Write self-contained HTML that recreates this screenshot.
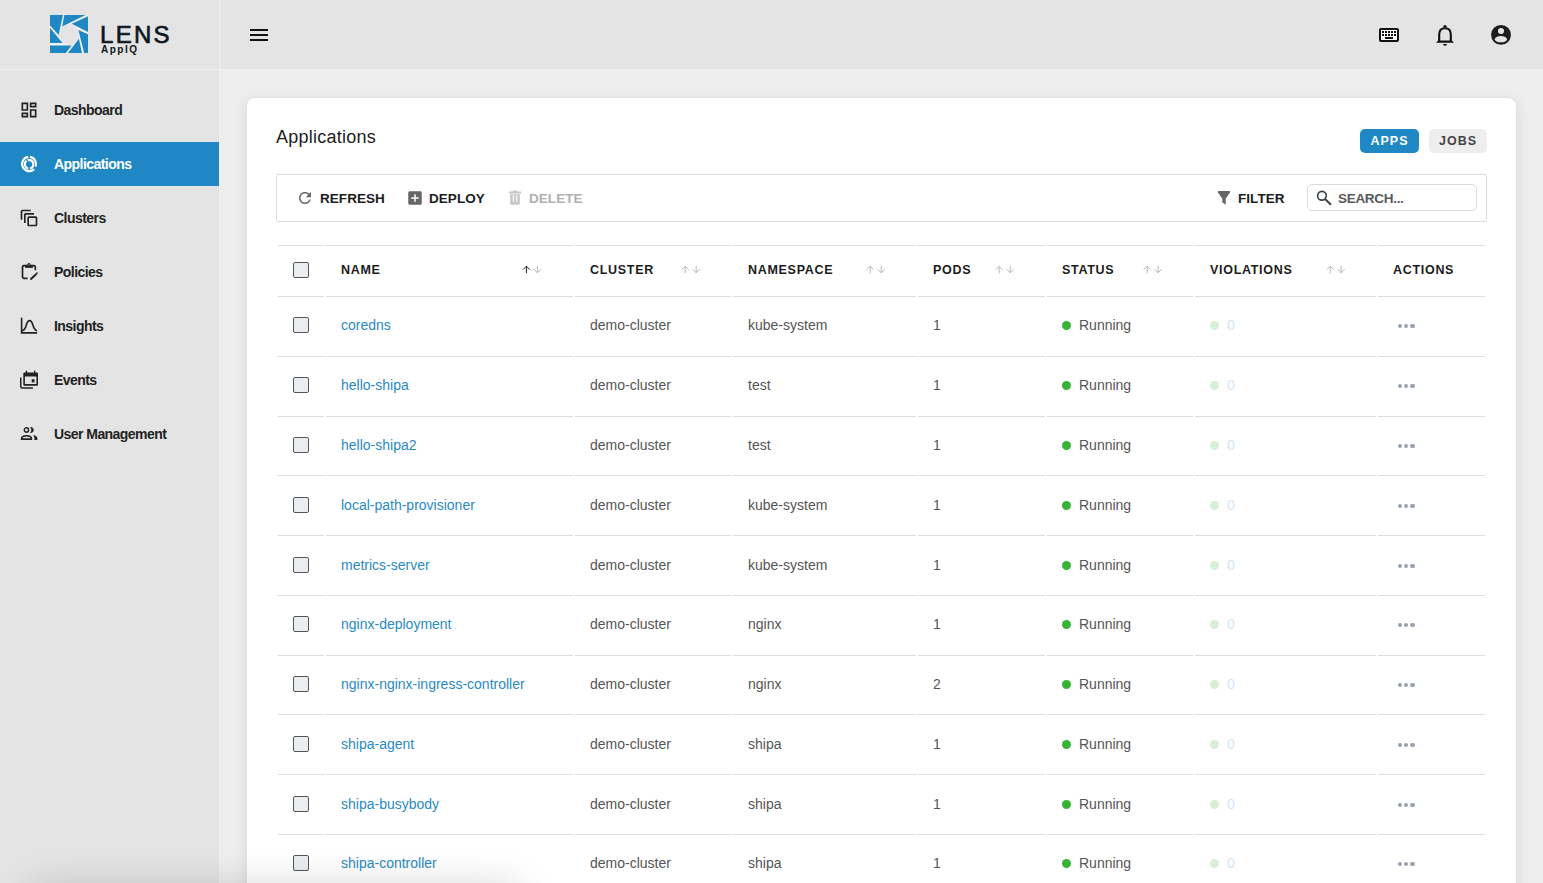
<!DOCTYPE html>
<html><head><meta charset="utf-8"><style>
*{box-sizing:border-box;margin:0;padding:0}
html,body{width:1543px;height:883px;overflow:hidden;background:#eeeeee;font-family:"Liberation Sans",sans-serif;position:relative}
.abs{position:absolute}
svg{position:absolute;overflow:visible}
#side{left:0;top:0;width:219px;height:883px;background:#e4e4e4}
#sideline{left:219px;top:0;width:1px;height:69px;background:#efefef}
#hdr{left:220px;top:0;width:1323px;height:69px;background:#e4e4e4}
#hline{left:0;top:69px;width:219px;height:1px;background:#efefef}
.nav{position:absolute;left:0;width:219px;height:44px;color:#222;font-size:14px;letter-spacing:-0.55px;font-weight:bold}
.nav span{position:absolute;left:54px;top:13px;line-height:18px;white-space:nowrap}
.nav svg{left:19px;top:12px}
.nav.sel{background:#1f88c4;color:#fff}
#card{left:247px;top:98px;width:1269px;height:900px;background:#fff;border-radius:8px;box-shadow:0 3px 14px rgba(10,25,45,.11),0 0 2px rgba(0,0,0,.05)}
#title{left:276px;top:126px;font-size:18px;letter-spacing:0.25px;color:#1c1c1c;line-height:22px;white-space:nowrap}
.tbtn{position:absolute;top:129px;height:24px;border-radius:5px;font-size:12.5px;font-weight:bold;letter-spacing:1.0px;line-height:24px;text-align:center;padding-left:0px}
#toolbar{left:276px;top:174px;width:1211px;height:48px;border:1px solid #dcdcdc;border-radius:2px}
.tb{position:absolute;top:190px;font-size:13.5px;font-weight:bold;letter-spacing:0.05px;line-height:18px;color:#1c1c1c;white-space:nowrap}
#search{left:1307px;top:184px;width:170px;height:27px;border:1px solid #dcdcdc;border-radius:5px}
.hl{position:absolute;height:1px;background:#dedede}
.th{position:absolute;top:262px;font-size:12.5px;font-weight:bold;letter-spacing:0.7px;color:#1c1c1c;line-height:16px;white-space:nowrap}
.td{position:absolute;font-size:14px;color:#555;line-height:18px;white-space:nowrap}
.lnk{color:#2a8ac4}
.cb{position:absolute;left:293px;width:16px;height:16px;border:1.5px solid #555;border-radius:2px;background:#eaeef2}
.dot{position:absolute;width:9px;height:9px;border-radius:50%}
.more{position:absolute;width:4.4px;height:4.4px;border-radius:50%;background:#97a2ae}
</style></head><body>
<div id="side" class="abs"></div><div id="hdr" class="abs"></div><div id="sideline" class="abs"></div><div id="hline" class="abs"></div>
<svg style="left:50px;top:15px" width="38" height="38" viewBox="0 0 38 38"><rect width="38" height="38" fill="#f4f0ec"/><polygon points="12.0,11.35 21.1,8.5 28.1,14.7 28.9,23.6 21.6,30.1 12.5,27.8 8.6,20.2" fill="#e4e4e4"/><polygon points="0,0 13.0,0 8.6,19.9 0,10.3" fill="#1f88c4"/><polygon points="14.3,0 35.7,0 12.2,11.4" fill="#1f88c4"/><polygon points="38,1.2 38,17.1 21.6,8.75" fill="#1f88c4"/><polygon points="28.4,15 38,19.2 38,38 34.1,38" fill="#1f88c4"/><polygon points="28.9,23.85 32,38 18,38" fill="#1f88c4"/><polygon points="0,30.4 21.6,30.4 15.9,38 0,38" fill="#1f88c4"/><polygon points="0,12.65 12.5,28 0,28" fill="#1f88c4"/></svg>
<div class="abs" style="left:100px;top:20px;font-size:24px;font-weight:normal;-webkit-text-stroke:0.65px #0d1620;letter-spacing:2.3px;color:#0d1620;line-height:30px">LENS</div>
<div class="abs" style="left:101px;top:44px;font-size:10px;font-weight:bold;letter-spacing:1.5px;color:#0d1620;line-height:12px">AppIQ</div>
<svg style="left:247px;top:23px" width="24" height="24" viewBox="0 0 24 24"><path fill="#111" d="M3 18h18v-2H3v2zm0-5h18v-2H3v2zm0-7v2h18V6H3z"/></svg>
<svg style="left:1377px;top:23px" width="24" height="24" viewBox="0 0 24 24"><path fill="#fff" d="M4 7h16v10H4z"/><path fill="#111" d="M20 7v10H4V7h16m0-2H4c-1.1 0-1.99.9-1.99 2L2 17c0 1.1.9 2 2 2h16c1.1 0 2-.9 2-2V7c0-1.1-.9-2-2-2zm-9 3h2v2h-2zm0 3h2v2h-2zM8 8h2v2H8zm0 3h2v2H8zm-3 0h2v2H5zm0-3h2v2H5zm3 6h8v2H8zm6-3h2v2h-2zm0-3h2v2h-2zm3 3h2v2h-2zm0-3h2v2h-2z"/></svg>
<svg style="left:0;top:0" width="1543" height="60"><path fill="#111" d="M1443 27.6 Q1443 25 1445 25 Q1447 25 1447 27.6 Z"/><path fill="none" stroke="#111" stroke-width="2.1" d="M1439.2 41 V34.5 Q1439.2 28.2 1445 28.2 Q1450.8 28.2 1450.8 34.5 V41"/><path fill="#111" d="M1436 42.8 L1438.2 40.4 H1451.8 L1454 42.8 Z"/><path fill="#111" d="M1443 44 H1447 Q1447 45.8 1445 45.8 Q1443 45.8 1443 44Z"/></svg>
<svg style="left:0;top:0" width="1543" height="60"><circle cx="1501" cy="34.85" r="9.95" fill="#1c1c1c"/><circle cx="1501" cy="31.05" r="3.05" fill="#e4e4e4"/><ellipse cx="1500.9" cy="39.2" rx="6.1" ry="3.1" fill="#e4e4e4"/></svg>
<div class="nav" style="top:88px" id="nav0"><svg width="20" height="20" viewBox="0 0 24 24"><path fill="#222" d="M19 5v2h-4V5h4M9 5v6H5V5h4m10 8v6h-4v-6h4M9 17v2H5v-2h4M21 3h-8v6h8V3zM11 3H3v10h8V3zm10 8h-8v10h8V11zm-10 4H3v6h8v-6z"/></svg><span>Dashboard</span></div>
<div class="nav sel" style="top:142px" id="nav1"><svg width="20" height="20" viewBox="0 0 20 20"><g fill="none" stroke="#fff"><path stroke-width="2.1" d="M9.3 2.9 A7.2 7.2 0 1 0 15.2 15.3"/><path stroke-width="2.1" d="M11.0 2.9 A7.2 7.2 0 0 1 16.6 12.6"/><circle cx="10.1" cy="10.3" r="4.3" stroke-width="2.3"/></g><path fill="#1f88c4" d="M9.3 9.5 H10.9 V16 H9.3 Z"/><path fill="none" stroke="#1f88c4" stroke-width="1.3" d="M7.3 5.2 L9.8 9.2"/><circle cx="10.6" cy="10" r="1.6" fill="#1f88c4"/></svg><span>Applications</span></div>
<div class="nav" style="top:196px" id="nav2"><svg width="20" height="20" viewBox="0 0 24 24"><path fill="#222" d="M14 2H4c-1.1 0-2 .9-2 2v10h2V4h10V2zm4 4H8c-1.1 0-2 .9-2 2v10h2V8h10V6zm2 4h-8c-1.1 0-2 .9-2 2v8c0 1.1.9 2 2 2h8c1.1 0 2-.9 2-2v-8c0-1.1-.9-2-2-2zm0 10h-8v-8h8v8z"/></svg><span>Clusters</span></div>
<div class="nav" style="top:250px" id="nav3"><svg width="20" height="20" viewBox="0 0 20 20"><g fill="none" stroke="#222" stroke-width="1.7" stroke-linejoin="round"><path d="M8.6 16.4 H4.8 Q3.5 16.4 3.5 15.1 V4.9 Q3.5 3.6 4.8 3.6 H15 Q16.3 3.6 16.3 4.9 V8.3"/></g><path fill="#222" d="M6.2 3.2 H13.9 V5.9 H6.2 Z"/><circle cx="9.95" cy="2.7" r="1.7" fill="#222"/><circle cx="9.95" cy="2.8" r="0.6" fill="#e4e4e4"/><path fill="none" stroke="#222" stroke-width="2" stroke-linecap="round" d="M12 16.9 L16.8 12.4"/><path fill="none" stroke="#222" stroke-width="1.5" d="M17.4 10.6 L18.5 11.7"/></svg><span>Policies</span></div>
<div class="nav" style="top:304px" id="nav4"><svg width="20" height="20" viewBox="0 0 20 20"><g fill="none" stroke="#222" stroke-width="1.6"><path d="M2.6 1.8 V16.9 H18.1"/><path d="M2.9 14.7 C5.4 14.7 6.3 13 7.4 8.8 C8.4 5.2 9.2 4.6 10.6 4.6 C12 4.6 12.8 5.2 13.8 8.8 C15 13 15.9 14.3 18.1 14.8"/></g></svg><span>Insights</span></div>
<div class="nav" style="top:358px" id="nav5"><svg width="20" height="20" viewBox="0 0 20 20"><g fill="#222"><path fill-rule="evenodd" d="M5.3 2.6 H18 Q19 2.6 19 3.6 V14.7 Q19 15.7 18 15.7 H5.3 Q4.3 15.7 4.3 14.7 V3.6 Q4.3 2.6 5.3 2.6 Z M5.9 6.5 V14.1 H17.4 V6.5 Z"/><rect x="6.8" y="0.6" width="1.3" height="2.4"/><rect x="15.0" y="0.6" width="1.3" height="2.4"/><rect x="12.7" y="9.2" width="2.8" height="3.2"/></g><path fill="none" stroke="#222" stroke-width="1.5" d="M1.75 7.4 V16.6 Q1.75 18.05 3.2 18.05 H13.9"/></svg><span>Events</span></div>
<div class="nav" style="top:412px" id="nav6"><svg width="20" height="20" viewBox="0 0 20 20"><g fill="none" stroke="#222" stroke-width="1.5"><circle cx="7.45" cy="6" r="2.15"/></g><path fill="#222" d="M11.1 3.2 A2.9 2.9 0 1 1 11.1 8.8 A4.2 4.2 0 0 0 11.1 3.2Z"/><path fill-rule="evenodd" fill="#222" d="M1.8 15.9 V14.6 Q1.8 11 7.5 11 Q13.2 11 13.2 14.6 V15.9 Z M3.4 14.3 H11.6 Q11.3 12.6 7.5 12.6 Q3.7 12.6 3.4 14.3Z"/><path fill="#222" d="M14 11.1 Q18.4 11.8 18.4 14.6 V15.9 H15.4 V14.4 Q15.4 12.6 14 11.1Z"/></svg><span>User Management</span></div>
<div id="card" class="abs"></div>
<div id="title" class="abs">Applications</div>
<div class="tbtn" id="apps" style="left:1360px;width:59px;background:#1f88c4;color:#fff">APPS</div>
<div class="tbtn" id="jobs" style="left:1429px;width:58px;background:#eeeeee;color:#444">JOBS</div>
<div id="toolbar" class="abs"></div>
<svg style="left:296px;top:189px" width="18" height="18" viewBox="0 0 24 24"><path fill="#666" d="M17.65 6.35C16.2 4.9 14.21 4 12 4c-4.42 0-7.99 3.58-7.99 8s3.57 8 7.99 8c3.73 0 6.84-2.55 7.730-6h-2.08c-.82 2.33-3.04 4-5.65 4-3.31 0-6-2.69-6-6s2.69-6 6-6c1.660 0 3.14.69 4.220 1.78L13 11h7V4l-2.35 2.35z"/></svg>
<div class="tb" id="t_refresh" style="left:320px">REFRESH</div>
<svg style="left:406px;top:189px" width="18" height="18" viewBox="0 0 24 24"><path fill="#666" d="M19 3H5c-1.11 0-2 .9-2 2v14c0 1.1.89 2 2 2h14c1.1 0 2-.9 2-2V5c0-1.1-.9-2-2-2zm-2 10h-4v4h-2v-4H7v-2h4V7h2v4h4v2z"/></svg>
<div class="tb" id="t_deploy" style="left:429px">DEPLOY</div>
<svg style="left:0;top:0" width="1" height="1"><path fill="#c6c6c6" d="M513.2 190.6 H516.8 L517.5 191.4 H521 V193.4 H509 V191.4 H512.5 Z M510.2 194.2 H519.8 V203.6 Q519.8 204.8 518.6 204.8 H511.4 Q510.2 204.8 510.2 203.6 Z M512.8 195.2 V201.8 H514 V195.2 Z M516 195.2 V201.8 H517.2 V195.2 Z" fill-rule="evenodd"/></svg>
<div class="tb" id="t_delete" style="left:529px;color:#b0b0b0">DELETE</div>
<svg style="left:0;top:0" width="1" height="1"><path fill="#666" d="M1218 191 H1230 V192.6 L1225.7 198.8 V204.8 L1222.3 202.2 V198.8 L1218 192.6 Z"/></svg>
<div class="tb" id="t_filter" style="left:1238px">FILTER</div>
<div id="search" class="abs"></div>
<svg style="left:0;top:0" width="1" height="1"><circle cx="1321.95" cy="195.75" r="4.35" fill="none" stroke="#3a4249" stroke-width="1.6"/><path d="M1325.3 199.2 L1330.3 204" stroke="#3a4249" stroke-width="2" stroke-linecap="square"/></svg>
<div class="tb" id="t_search" style="left:1338px;color:#595959;letter-spacing:-0.3px">SEARCH...</div>
<div class="hl" style="left:278px;top:245px;width:46px"></div>
<div class="hl" style="left:326px;top:245px;width:247px"></div>
<div class="hl" style="left:575px;top:245px;width:156px"></div>
<div class="hl" style="left:733px;top:245px;width:183px"></div>
<div class="hl" style="left:918px;top:245px;width:127px"></div>
<div class="hl" style="left:1047px;top:245px;width:146px"></div>
<div class="hl" style="left:1195px;top:245px;width:181px"></div>
<div class="hl" style="left:1378px;top:245px;width:107px"></div>
<div class="hl" style="left:278px;top:296px;width:46px"></div>
<div class="hl" style="left:326px;top:296px;width:247px"></div>
<div class="hl" style="left:575px;top:296px;width:156px"></div>
<div class="hl" style="left:733px;top:296px;width:183px"></div>
<div class="hl" style="left:918px;top:296px;width:127px"></div>
<div class="hl" style="left:1047px;top:296px;width:146px"></div>
<div class="hl" style="left:1195px;top:296px;width:181px"></div>
<div class="hl" style="left:1378px;top:296px;width:107px"></div>
<div class="hl" style="left:278px;top:356px;width:46px"></div>
<div class="hl" style="left:326px;top:356px;width:247px"></div>
<div class="hl" style="left:575px;top:356px;width:156px"></div>
<div class="hl" style="left:733px;top:356px;width:183px"></div>
<div class="hl" style="left:918px;top:356px;width:127px"></div>
<div class="hl" style="left:1047px;top:356px;width:146px"></div>
<div class="hl" style="left:1195px;top:356px;width:181px"></div>
<div class="hl" style="left:1378px;top:356px;width:107px"></div>
<div class="hl" style="left:278px;top:416px;width:46px"></div>
<div class="hl" style="left:326px;top:416px;width:247px"></div>
<div class="hl" style="left:575px;top:416px;width:156px"></div>
<div class="hl" style="left:733px;top:416px;width:183px"></div>
<div class="hl" style="left:918px;top:416px;width:127px"></div>
<div class="hl" style="left:1047px;top:416px;width:146px"></div>
<div class="hl" style="left:1195px;top:416px;width:181px"></div>
<div class="hl" style="left:1378px;top:416px;width:107px"></div>
<div class="hl" style="left:278px;top:475px;width:46px"></div>
<div class="hl" style="left:326px;top:475px;width:247px"></div>
<div class="hl" style="left:575px;top:475px;width:156px"></div>
<div class="hl" style="left:733px;top:475px;width:183px"></div>
<div class="hl" style="left:918px;top:475px;width:127px"></div>
<div class="hl" style="left:1047px;top:475px;width:146px"></div>
<div class="hl" style="left:1195px;top:475px;width:181px"></div>
<div class="hl" style="left:1378px;top:475px;width:107px"></div>
<div class="hl" style="left:278px;top:535px;width:46px"></div>
<div class="hl" style="left:326px;top:535px;width:247px"></div>
<div class="hl" style="left:575px;top:535px;width:156px"></div>
<div class="hl" style="left:733px;top:535px;width:183px"></div>
<div class="hl" style="left:918px;top:535px;width:127px"></div>
<div class="hl" style="left:1047px;top:535px;width:146px"></div>
<div class="hl" style="left:1195px;top:535px;width:181px"></div>
<div class="hl" style="left:1378px;top:535px;width:107px"></div>
<div class="hl" style="left:278px;top:595px;width:46px"></div>
<div class="hl" style="left:326px;top:595px;width:247px"></div>
<div class="hl" style="left:575px;top:595px;width:156px"></div>
<div class="hl" style="left:733px;top:595px;width:183px"></div>
<div class="hl" style="left:918px;top:595px;width:127px"></div>
<div class="hl" style="left:1047px;top:595px;width:146px"></div>
<div class="hl" style="left:1195px;top:595px;width:181px"></div>
<div class="hl" style="left:1378px;top:595px;width:107px"></div>
<div class="hl" style="left:278px;top:655px;width:46px"></div>
<div class="hl" style="left:326px;top:655px;width:247px"></div>
<div class="hl" style="left:575px;top:655px;width:156px"></div>
<div class="hl" style="left:733px;top:655px;width:183px"></div>
<div class="hl" style="left:918px;top:655px;width:127px"></div>
<div class="hl" style="left:1047px;top:655px;width:146px"></div>
<div class="hl" style="left:1195px;top:655px;width:181px"></div>
<div class="hl" style="left:1378px;top:655px;width:107px"></div>
<div class="hl" style="left:278px;top:714px;width:46px"></div>
<div class="hl" style="left:326px;top:714px;width:247px"></div>
<div class="hl" style="left:575px;top:714px;width:156px"></div>
<div class="hl" style="left:733px;top:714px;width:183px"></div>
<div class="hl" style="left:918px;top:714px;width:127px"></div>
<div class="hl" style="left:1047px;top:714px;width:146px"></div>
<div class="hl" style="left:1195px;top:714px;width:181px"></div>
<div class="hl" style="left:1378px;top:714px;width:107px"></div>
<div class="hl" style="left:278px;top:774px;width:46px"></div>
<div class="hl" style="left:326px;top:774px;width:247px"></div>
<div class="hl" style="left:575px;top:774px;width:156px"></div>
<div class="hl" style="left:733px;top:774px;width:183px"></div>
<div class="hl" style="left:918px;top:774px;width:127px"></div>
<div class="hl" style="left:1047px;top:774px;width:146px"></div>
<div class="hl" style="left:1195px;top:774px;width:181px"></div>
<div class="hl" style="left:1378px;top:774px;width:107px"></div>
<div class="hl" style="left:278px;top:834px;width:46px"></div>
<div class="hl" style="left:326px;top:834px;width:247px"></div>
<div class="hl" style="left:575px;top:834px;width:156px"></div>
<div class="hl" style="left:733px;top:834px;width:183px"></div>
<div class="hl" style="left:918px;top:834px;width:127px"></div>
<div class="hl" style="left:1047px;top:834px;width:146px"></div>
<div class="hl" style="left:1195px;top:834px;width:181px"></div>
<div class="hl" style="left:1378px;top:834px;width:107px"></div>
<div class="th" id="h0" style="left:341px">NAME</div>
<div class="th" id="h1" style="left:590px">CLUSTER</div>
<div class="th" id="h2" style="left:748px">NAMESPACE</div>
<div class="th" id="h3" style="left:933px">PODS</div>
<div class="th" id="h4" style="left:1062px">STATUS</div>
<div class="th" id="h5" style="left:1210px">VIOLATIONS</div>
<div class="th" id="h6" style="left:1393px">ACTIONS</div>
<svg style="left:0;top:0" width="1" height="1"><g fill="none" stroke-width="1.0" stroke-linecap="round" stroke-linejoin="round"><path stroke="#222" d="M526.4000000000001 272.9 V266.4 M523.2 269.4 L526.4000000000001 266.2 L529.6000000000001 269.4"/><path stroke="#b8b8b8" d="M537.4000000000001 266.1 V272.6 M534.2 269.6 L537.4000000000001 272.8 L540.6000000000001 269.6"/></g></svg>
<svg style="left:0;top:0" width="1" height="1"><g fill="none" stroke-width="1.0" stroke-linecap="round" stroke-linejoin="round"><path stroke="#b8b8b8" d="M685.2 272.9 V266.4 M682.0 269.4 L685.2 266.2 L688.4000000000001 269.4"/><path stroke="#b8b8b8" d="M696.2 266.1 V272.6 M693.0 269.6 L696.2 272.8 L699.4000000000001 269.6"/></g></svg>
<svg style="left:0;top:0" width="1" height="1"><g fill="none" stroke-width="1.0" stroke-linecap="round" stroke-linejoin="round"><path stroke="#b8b8b8" d="M870.2 272.9 V266.4 M867.0 269.4 L870.2 266.2 L873.4000000000001 269.4"/><path stroke="#b8b8b8" d="M881.2 266.1 V272.6 M878.0 269.6 L881.2 272.8 L884.4000000000001 269.6"/></g></svg>
<svg style="left:0;top:0" width="1" height="1"><g fill="none" stroke-width="1.0" stroke-linecap="round" stroke-linejoin="round"><path stroke="#b8b8b8" d="M999.2 272.9 V266.4 M996.0 269.4 L999.2 266.2 L1002.4000000000001 269.4"/><path stroke="#b8b8b8" d="M1010.2 266.1 V272.6 M1007.0 269.6 L1010.2 272.8 L1013.4000000000001 269.6"/></g></svg>
<svg style="left:0;top:0" width="1" height="1"><g fill="none" stroke-width="1.0" stroke-linecap="round" stroke-linejoin="round"><path stroke="#b8b8b8" d="M1147.2 272.9 V266.4 M1144.0 269.4 L1147.2 266.2 L1150.4 269.4"/><path stroke="#b8b8b8" d="M1158.2 266.1 V272.6 M1155.0 269.6 L1158.2 272.8 L1161.4 269.6"/></g></svg>
<svg style="left:0;top:0" width="1" height="1"><g fill="none" stroke-width="1.0" stroke-linecap="round" stroke-linejoin="round"><path stroke="#b8b8b8" d="M1330.2 272.9 V266.4 M1327.0 269.4 L1330.2 266.2 L1333.4 269.4"/><path stroke="#b8b8b8" d="M1341.2 266.1 V272.6 M1338.0 269.6 L1341.2 272.8 L1344.4 269.6"/></g></svg>
<div class="cb" style="top:262px"></div>
<div class="cb" style="top:317px"></div>
<div class="td lnk" id="n0" style="left:341px;top:316px">coredns</div>
<div class="td" id="c0" style="left:590px;top:316px">demo-cluster</div>
<div class="td" id="s0" style="left:748px;top:316px">kube-system</div>
<div class="td" style="left:933px;top:316px">1</div>
<div class="dot" style="left:1062px;top:321px;background:#37b337"></div>
<div class="td" id="r0" style="left:1079px;top:316px">Running</div>
<div class="dot" style="left:1210px;top:321px;background:#d6f0d6"></div>
<div class="td" style="left:1227px;top:316px;color:#d3e6f5">0</div>
<div class="more" style="left:1397.5px;top:324px"></div>
<div class="more" style="left:1403.7px;top:324px"></div>
<div class="more" style="left:1410.3px;top:324px"></div>
<div class="cb" style="top:377px"></div>
<div class="td lnk" id="n1" style="left:341px;top:376px">hello-shipa</div>
<div class="td" id="c1" style="left:590px;top:376px">demo-cluster</div>
<div class="td" id="s1" style="left:748px;top:376px">test</div>
<div class="td" style="left:933px;top:376px">1</div>
<div class="dot" style="left:1062px;top:381px;background:#37b337"></div>
<div class="td" id="r1" style="left:1079px;top:376px">Running</div>
<div class="dot" style="left:1210px;top:381px;background:#d6f0d6"></div>
<div class="td" style="left:1227px;top:376px;color:#d3e6f5">0</div>
<div class="more" style="left:1397.5px;top:384px"></div>
<div class="more" style="left:1403.7px;top:384px"></div>
<div class="more" style="left:1410.3px;top:384px"></div>
<div class="cb" style="top:437px"></div>
<div class="td lnk" id="n2" style="left:341px;top:436px">hello-shipa2</div>
<div class="td" id="c2" style="left:590px;top:436px">demo-cluster</div>
<div class="td" id="s2" style="left:748px;top:436px">test</div>
<div class="td" style="left:933px;top:436px">1</div>
<div class="dot" style="left:1062px;top:441px;background:#37b337"></div>
<div class="td" id="r2" style="left:1079px;top:436px">Running</div>
<div class="dot" style="left:1210px;top:441px;background:#d6f0d6"></div>
<div class="td" style="left:1227px;top:436px;color:#d3e6f5">0</div>
<div class="more" style="left:1397.5px;top:444px"></div>
<div class="more" style="left:1403.7px;top:444px"></div>
<div class="more" style="left:1410.3px;top:444px"></div>
<div class="cb" style="top:497px"></div>
<div class="td lnk" id="n3" style="left:341px;top:496px">local-path-provisioner</div>
<div class="td" id="c3" style="left:590px;top:496px">demo-cluster</div>
<div class="td" id="s3" style="left:748px;top:496px">kube-system</div>
<div class="td" style="left:933px;top:496px">1</div>
<div class="dot" style="left:1062px;top:501px;background:#37b337"></div>
<div class="td" id="r3" style="left:1079px;top:496px">Running</div>
<div class="dot" style="left:1210px;top:501px;background:#d6f0d6"></div>
<div class="td" style="left:1227px;top:496px;color:#d3e6f5">0</div>
<div class="more" style="left:1397.5px;top:504px"></div>
<div class="more" style="left:1403.7px;top:504px"></div>
<div class="more" style="left:1410.3px;top:504px"></div>
<div class="cb" style="top:557px"></div>
<div class="td lnk" id="n4" style="left:341px;top:556px">metrics-server</div>
<div class="td" id="c4" style="left:590px;top:556px">demo-cluster</div>
<div class="td" id="s4" style="left:748px;top:556px">kube-system</div>
<div class="td" style="left:933px;top:556px">1</div>
<div class="dot" style="left:1062px;top:561px;background:#37b337"></div>
<div class="td" id="r4" style="left:1079px;top:556px">Running</div>
<div class="dot" style="left:1210px;top:561px;background:#d6f0d6"></div>
<div class="td" style="left:1227px;top:556px;color:#d3e6f5">0</div>
<div class="more" style="left:1397.5px;top:564px"></div>
<div class="more" style="left:1403.7px;top:564px"></div>
<div class="more" style="left:1410.3px;top:564px"></div>
<div class="cb" style="top:616px"></div>
<div class="td lnk" id="n5" style="left:341px;top:615px">nginx-deployment</div>
<div class="td" id="c5" style="left:590px;top:615px">demo-cluster</div>
<div class="td" id="s5" style="left:748px;top:615px">nginx</div>
<div class="td" style="left:933px;top:615px">1</div>
<div class="dot" style="left:1062px;top:620px;background:#37b337"></div>
<div class="td" id="r5" style="left:1079px;top:615px">Running</div>
<div class="dot" style="left:1210px;top:620px;background:#d6f0d6"></div>
<div class="td" style="left:1227px;top:615px;color:#d3e6f5">0</div>
<div class="more" style="left:1397.5px;top:623px"></div>
<div class="more" style="left:1403.7px;top:623px"></div>
<div class="more" style="left:1410.3px;top:623px"></div>
<div class="cb" style="top:676px"></div>
<div class="td lnk" id="n6" style="left:341px;top:675px">nginx-nginx-ingress-controller</div>
<div class="td" id="c6" style="left:590px;top:675px">demo-cluster</div>
<div class="td" id="s6" style="left:748px;top:675px">nginx</div>
<div class="td" style="left:933px;top:675px">2</div>
<div class="dot" style="left:1062px;top:680px;background:#37b337"></div>
<div class="td" id="r6" style="left:1079px;top:675px">Running</div>
<div class="dot" style="left:1210px;top:680px;background:#d6f0d6"></div>
<div class="td" style="left:1227px;top:675px;color:#d3e6f5">0</div>
<div class="more" style="left:1397.5px;top:683px"></div>
<div class="more" style="left:1403.7px;top:683px"></div>
<div class="more" style="left:1410.3px;top:683px"></div>
<div class="cb" style="top:736px"></div>
<div class="td lnk" id="n7" style="left:341px;top:735px">shipa-agent</div>
<div class="td" id="c7" style="left:590px;top:735px">demo-cluster</div>
<div class="td" id="s7" style="left:748px;top:735px">shipa</div>
<div class="td" style="left:933px;top:735px">1</div>
<div class="dot" style="left:1062px;top:740px;background:#37b337"></div>
<div class="td" id="r7" style="left:1079px;top:735px">Running</div>
<div class="dot" style="left:1210px;top:740px;background:#d6f0d6"></div>
<div class="td" style="left:1227px;top:735px;color:#d3e6f5">0</div>
<div class="more" style="left:1397.5px;top:743px"></div>
<div class="more" style="left:1403.7px;top:743px"></div>
<div class="more" style="left:1410.3px;top:743px"></div>
<div class="cb" style="top:796px"></div>
<div class="td lnk" id="n8" style="left:341px;top:795px">shipa-busybody</div>
<div class="td" id="c8" style="left:590px;top:795px">demo-cluster</div>
<div class="td" id="s8" style="left:748px;top:795px">shipa</div>
<div class="td" style="left:933px;top:795px">1</div>
<div class="dot" style="left:1062px;top:800px;background:#37b337"></div>
<div class="td" id="r8" style="left:1079px;top:795px">Running</div>
<div class="dot" style="left:1210px;top:800px;background:#d6f0d6"></div>
<div class="td" style="left:1227px;top:795px;color:#d3e6f5">0</div>
<div class="more" style="left:1397.5px;top:803px"></div>
<div class="more" style="left:1403.7px;top:803px"></div>
<div class="more" style="left:1410.3px;top:803px"></div>
<div class="cb" style="top:855px"></div>
<div class="td lnk" id="n9" style="left:341px;top:854px">shipa-controller</div>
<div class="td" id="c9" style="left:590px;top:854px">demo-cluster</div>
<div class="td" id="s9" style="left:748px;top:854px">shipa</div>
<div class="td" style="left:933px;top:854px">1</div>
<div class="dot" style="left:1062px;top:859px;background:#37b337"></div>
<div class="td" id="r9" style="left:1079px;top:854px">Running</div>
<div class="dot" style="left:1210px;top:859px;background:#d6f0d6"></div>
<div class="td" style="left:1227px;top:854px;color:#d3e6f5">0</div>
<div class="more" style="left:1397.5px;top:862px"></div>
<div class="more" style="left:1403.7px;top:862px"></div>
<div class="more" style="left:1410.3px;top:862px"></div>
<div class="abs" style="left:40px;top:900px;width:470px;height:60px;border-radius:4px;background:#fff;box-shadow:0 -2px 40px 10px rgba(0,0,0,.18)"></div>
</body></html>
